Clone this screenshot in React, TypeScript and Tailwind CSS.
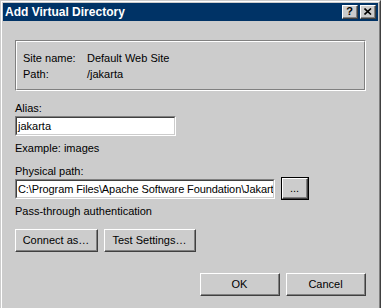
import React from 'react';

const face = 'bg-[#cccccc]';

function Raised({ className = '', children }: { className?: string; children: React.ReactNode }) {
  return (
    <div className={`border-t border-l border-white border-r border-b border-r-[#404040] border-b-[#404040] ${face} ${className}`}>
      <div className="w-full h-full flex items-center justify-center border-r border-b border-[#808080]">
        {children}
      </div>
    </div>
  );
}

function Sunken({ className = '', children }: { className?: string; children: React.ReactNode }) {
  return (
    <div className={`border-t border-l border-[#808080] border-r border-b border-r-white border-b-white ${className}`}>
      <div className="w-full h-full bg-white border-t border-l border-[#404040] border-r border-b border-r-[#cccccc] border-b-[#cccccc] overflow-hidden whitespace-nowrap pl-[1px] flex items-center">
        {children}
      </div>
    </div>
  );
}

export default function App() {
  return (
    <div className="w-[381px] h-[308px] overflow-hidden bg-[#cccccc] font-['Liberation_Sans',Arial,sans-serif] text-[11px] text-black">
      {/* window frame */}
      <div className="h-[330px] border-t border-l border-[#cccccc] border-r border-r-[#404040]">
        <div className="h-full border-t border-l border-white border-r border-r-[#808080] pt-[1px] pl-[1px] pr-[1px]">
          {/* Title bar */}
          <div className="h-[18px] bg-[#003366] flex items-center justify-between pl-[2px] pr-[2px]">
            <span className="text-white font-bold text-[12px] leading-none">Add Virtual Directory</span>
            <div className="flex gap-[2px]">
              <Raised className="w-[16px] h-[14px]">
                <span className="font-bold text-[11px] leading-none">?</span>
              </Raised>
              <Raised className="w-[16px] h-[14px]">
                <svg width="8" height="7" viewBox="0 0 8 7">
                  <path d="M0.5 0.5 L7 6.5 M7 0.5 L0.5 6.5" stroke="black" strokeWidth="1.6" />
                </svg>
              </Raised>
            </div>
          </div>

          {/* Body */}
          <div className="px-[12px] leading-[16px]">
            <div className="mt-[19px] border-t border-l border-[#808080] border-r border-b border-r-white border-b-white">
              <div className="border-t border-l border-white border-r border-b border-r-[#808080] border-b-[#808080] pt-[8px] pb-[7px] pl-[6px]">
                <div className="flex">
                  <span className="w-[64px]">Site name:</span>
                  <span>Default Web Site</span>
                </div>
                <div className="flex">
                  <span className="w-[64px]">Path:</span>
                  <span>/jakarta</span>
                </div>
              </div>
            </div>

            <div className="mt-[9px]">Alias:</div>
            <Sunken className="w-[161px] h-[20px]">jakarta</Sunken>
            <div className="mt-[4px]">Example: images</div>

            <div className="mt-[7px]">Physical path:</div>
            <div className="flex items-start gap-[6px]">
              <Sunken className="w-[260px] h-[20px]">
                <span className="tracking-[-0.1px]">C:\Program Files\Apache Software Foundation\Jakarta</span>
              </Sunken>
              <div className="-mt-[2px] -mb-[1px] border border-black">
                <Raised className="w-[26px] h-[21px]">...</Raised>
              </div>
            </div>
            <div className="mt-[4px]">Pass-through authentication</div>

            <div className="mt-[10px] flex gap-[6px]">
              <Raised className="w-[83px] h-[23px]">Connect as…</Raised>
              <Raised className="w-[92px] h-[23px]">Test Settings…</Raised>
            </div>

            <div className="mt-[21px] flex justify-end gap-[6px]">
              <Raised className="w-[80px] h-[23px]">OK</Raised>
              <Raised className="w-[80px] h-[23px]">Cancel</Raised>
            </div>
          </div>
        </div>
      </div>
    </div>
  );
}
